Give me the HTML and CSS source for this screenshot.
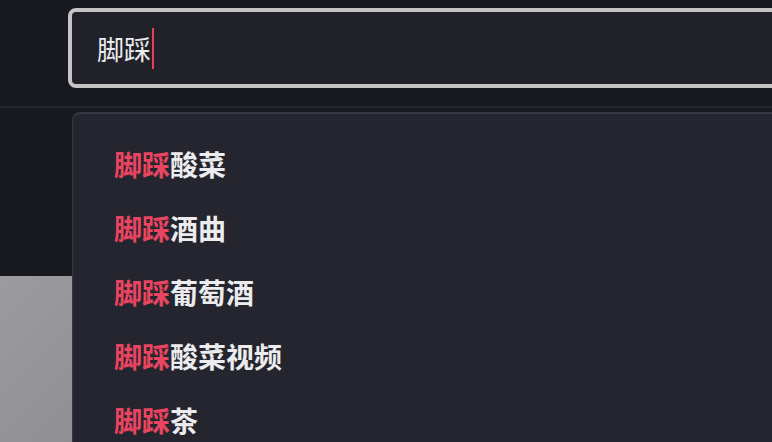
FILE: index.html
```html
<!DOCTYPE html>
<html lang="zh">
<head>
<meta charset="utf-8">
<link rel="stylesheet" href="styles.css">
</head>
<body>
<div class="page">
  <header class="header">
    <div class="search">
      <span class="query">脚踩</span><span class="caret"></span>
    </div>
  </header>
  <div class="divider"></div>
  <main class="content">
    <div class="thumb"></div>
  </main>
  <ul class="suggest">
    <li class="item"><span class="hl">脚踩</span>酸菜</li>
    <li class="item"><span class="hl">脚踩</span>酒曲</li>
    <li class="item"><span class="hl">脚踩</span>葡萄酒</li>
    <li class="item"><span class="hl">脚踩</span>酸菜视频</li>
    <li class="item"><span class="hl">脚踩</span>茶</li>
  </ul>
</div>
</body>
</html>
```
FILE: styles.css
```css
html, body {
  margin: 0;
  padding: 0;
  background: #18181f;
  overflow: hidden;
  font-family: "Noto Sans CJK SC", "Noto Sans", sans-serif;
}
.page {
  position: relative;
  width: 772px;
  height: 442px;
  overflow: hidden;
}
.header {
  height: 106px;
  padding: 8px 0 0 68px;
  box-sizing: border-box;
}
.search {
  width: 760px;
  height: 80px;
  box-sizing: border-box;
  border: 4px solid #c4c4c6;
  border-radius: 8px;
  background: #21212a;
  display: flex;
  align-items: center;
  padding-left: 25px;
}
.query {
  color: #ececee;
  font-size: 27px;
  line-height: 1;
}
.caret {
  width: 2px;
  height: 41px;
  background: #e8405a;
  margin-left: 1px;
}
.divider {
  height: 2px;
  background: #25252d;
}
.content {
  padding-top: 168px;
}
.thumb {
  width: 200px;
  height: 200px;
  background: linear-gradient(135deg, #9c9ca0, #87878b);
}
.suggest {
  position: absolute;
  left: 72px;
  top: 112px;
  width: 760px;
  height: 400px;
  margin: 0;
  padding: 18px 0 0 41px;
  box-sizing: border-box;
  list-style: none;
  background: #25252f;
  border: 1px solid #383843;
  border-top-width: 2px;
  border-radius: 8px;
}
.item {
  height: 64px;
  line-height: 64px;
  font-size: 28px;
  font-weight: 700;
  color: #ececee;
}
.hl {
  color: #ea4560;
}
```
